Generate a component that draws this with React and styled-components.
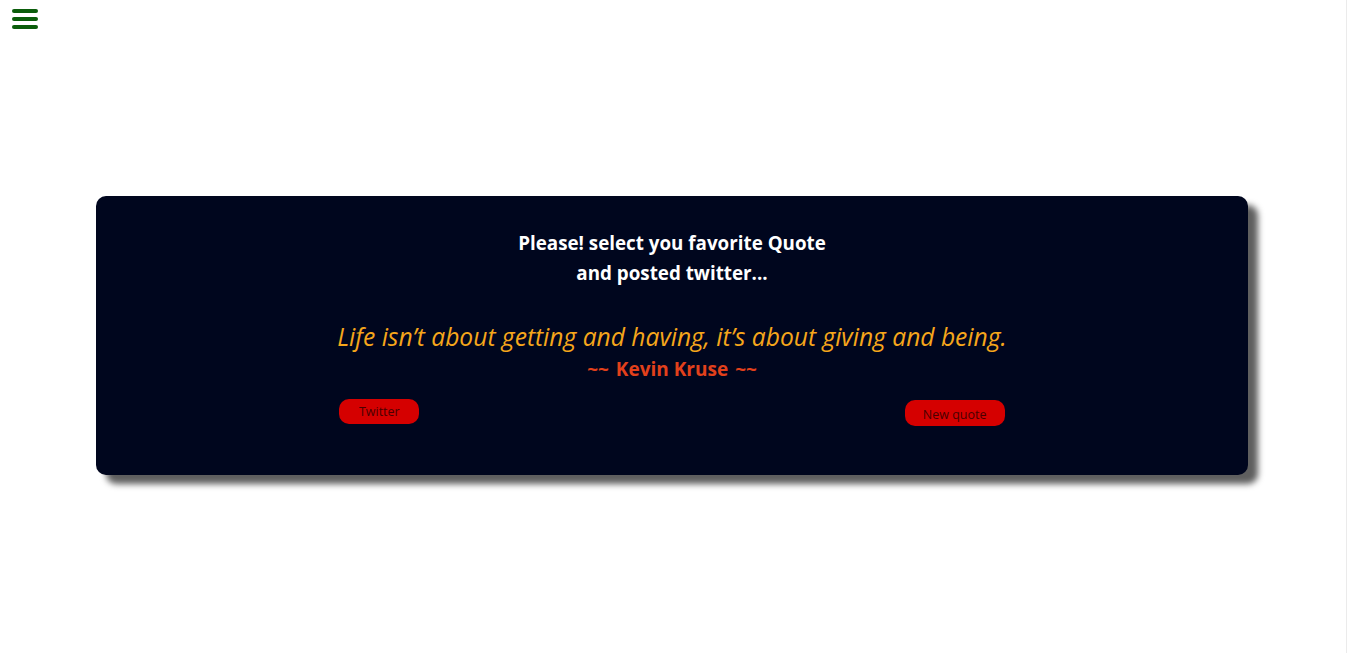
import styled, { createGlobalStyle } from "styled-components";
import { useState } from "react";

const GlobalStyle = createGlobalStyle`
  * {
    box-sizing: border-box;
  }
  body {
    margin: 0;
    background: #fff;
    font-family: "Open Sans", "Noto Sans", sans-serif;
  }
`;

const Page = styled.div`
  min-height: 100vh;
  border-right: 1px solid #ebebeb;
  display: flex;
  flex-direction: column;
`;

const MenuButton = styled.button`
  width: 28px;
  height: 24px;
  margin: 7px 0 0 11px;
  padding: 0;
  border: none;
  background: none;
  cursor: pointer;
  svg {
    display: block;
  }
`;

const Card = styled.section`
  width: 1152px;
  height: 279px;
  margin: 165px auto 0 96px;
  background-color: #00061e;
  border-radius: 10px;
  box-shadow: 10px 9px 6px #5f5f5f;
  display: flex;
  justify-content: center;
  padding-top: 32px;
`;

const Inner = styled.div`
  display: flex;
  flex-direction: column;
  align-items: center;
`;

const Title = styled.h2`
  margin: 0;
  color: #fff;
  font-size: 18.8px;
  font-weight: 700;
  line-height: 30px;
  text-align: center;
`;

const Quote = styled.p`
  margin: 33px 0 0;
  color: #f6a61b;
  font-style: italic;
  font-size: 24.6px;
  line-height: 32px;
  text-align: center;
`;

const Author = styled.p`
  margin: 4px 0 0;
  color: #e2401b;
  font-weight: 700;
  font-size: 19px;
  line-height: 24px;
  span {
    margin: 0 7px;
  }
`;

const BtnWrap = styled.div`
  align-self: stretch;
  display: flex;
  justify-content: space-between;
  align-items: flex-start;
  padding: 18px 2px 0 2px;
`;

const Button = styled.button`
  width: ${(p) => p.$w}px;
  height: ${(p) => p.$h}px;
  margin-top: ${(p) => p.$top || 0}px;
  border: none;
  border-radius: 10px;
  background-color: #d50000;
  color: #4a0000;
  font-family: "Open Sans", "Noto Sans", sans-serif;
  font-size: 12.5px;
  padding: 0;
  padding-top: ${(p) => p.$pad || 0}px;
  cursor: pointer;
`;

const quotes = [
  {
    text: "Life isn’t about getting and having, it’s about giving and being.",
    author: "Kevin Kruse",
  },
  {
    text: "Whatever the mind of man can conceive and believe, it can achieve.",
    author: "Napoleon Hill",
  },
];

const App = () => {
  const [current, setCurrent] = useState(quotes[0]);

  const handleNext = () => {
    const randomIndex = Math.floor(Math.random() * quotes.length);
    setCurrent(quotes[randomIndex]);
  };

  return (
    <Page>
      <GlobalStyle />
      <MenuButton aria-label="menu">
        <svg width="28" height="24" viewBox="0 0 28 24">
          <g stroke="#0b5d0b" strokeWidth="4" strokeLinecap="round">
            <line x1="3" y1="4" x2="25" y2="4" />
            <line x1="3" y1="12" x2="25" y2="12" />
            <line x1="3" y1="20" x2="25" y2="20" />
          </g>
        </svg>
      </MenuButton>
      <Card>
        <Inner>
          <Title>
            Please! select you favorite Quote
            <br />
            and posted twitter...
          </Title>
          <Quote>{current.text}</Quote>
          <Author>
            ~~<span>{current.author}</span>~~
          </Author>
          <BtnWrap>
            <Button $w={80} $h={25}>
              Twitter
            </Button>
            <Button $w={100} $h={26} $top={1} $pad={2} onClick={handleNext}>
              New quote
            </Button>
          </BtnWrap>
        </Inner>
      </Card>
    </Page>
  );
};

export default App;
